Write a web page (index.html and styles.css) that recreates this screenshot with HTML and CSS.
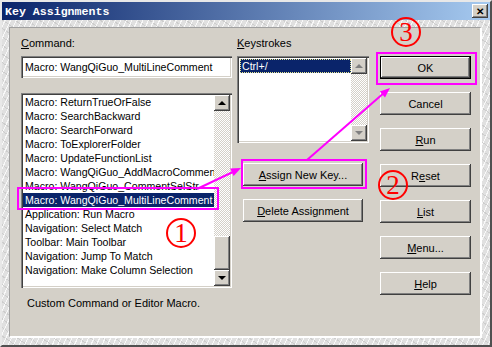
FILE: index.html
```html
<!DOCTYPE html>
<html lang="en">
<head>
    <meta charset="UTF-8">
    <title>Key Assignments</title>
    <link rel="stylesheet" href="styles.css">
</head>
<body>
    <div class="window">
        <div class="titlebar">
            <span class="title">Key Assignments</span>
            <span class="close">&#x2715;</span>
        </div>
        <div class="frame">
            <div class="panel">
                <div class="col col-command">
                    <div class="label"><u>C</u>ommand:</div>
                    <div class="field">Macro: WangQiGuo_MultiLineComment</div>
                    <div class="listbox commands">
                        <ul class="items">
                            <li>Macro: ReturnTrueOrFalse</li>
                            <li>Macro: SearchBackward</li>
                            <li>Macro: SearchForward</li>
                            <li>Macro: ToExplorerFolder</li>
                            <li>Macro: UpdateFunctionList</li>
                            <li>Macro: WangQiGuo_AddMacroComment</li>
                            <li>Macro: WangQiGuo_CommentSelStr</li>
                            <li class="selected">Macro: WangQiGuo_MultiLineComment</li>
                            <li>Application: Run Macro</li>
                            <li>Navigation: Select Match</li>
                            <li>Toolbar: Main Toolbar</li>
                            <li>Navigation: Jump To Match</li>
                            <li>Navigation: Make Column Selection</li>
                        </ul>
                        <div class="scrollbar">
                            <span class="sb-btn"><i class="arrow up"></i></span>
                            <span class="sb-track"><span class="sb-thumb"></span></span>
                            <span class="sb-btn"><i class="arrow down"></i></span>
                        </div>
                    </div>
                    <p class="hint">Custom Command or Editor Macro.</p>
                </div>

                <div class="col col-keys">
                    <div class="label"><u>K</u>eystrokes</div>
                    <div class="listbox keys">
                        <ul class="items">
                            <li class="selected focus">Ctrl+/</li>
                        </ul>
                        <div class="scrollbar">
                            <span class="sb-btn"><i class="arrow up off"></i></span>
                            <span class="sb-track"></span>
                            <span class="sb-btn"><i class="arrow down off"></i></span>
                        </div>
                    </div>
                    <button class="btn wide assign"><u>A</u>ssign New Key...</button>
                    <button class="btn wide"><u>D</u>elete Assignment</button>
                </div>

                <div class="col col-buttons">
                    <button class="btn default">OK</button>
                    <button class="btn">Cancel</button>
                    <button class="btn"><u>R</u>un</button>
                    <button class="btn">R<u>e</u>set</button>
                    <button class="btn"><u>L</u>ist</button>
                    <button class="btn"><u>M</u>enu...</button>
                    <button class="btn"><u>H</u>elp</button>
                </div>
            </div>
        </div>

        <!-- annotations drawn over the dialog -->
        <svg class="marks" width="492" height="347" viewBox="0 0 492 347">
            <rect x="18" y="188" width="200" height="21" />
            <rect x="242" y="160" width="124" height="28" />
            <rect x="377" y="53" width="99" height="31" />
            <line x1="197" y1="189" x2="235" y2="171" />
            <polygon points="241,168 233.6,175.9 230.2,168.6" />
            <line x1="307" y1="160" x2="385" y2="92" />
            <polygon points="390,88 385,97.5 379.8,91.5" />
        </svg>
        <span class="num n1">1</span>
        <span class="num n2">2</span>
        <span class="num n3">3</span>
    </div>
</body>
</html>
```

FILE: styles.css
```css
* {
    box-sizing: border-box;
}

body {
    margin: 0;
    background: #d4d0c8;
    font-family: "Liberation Sans", Arial, sans-serif;
    font-size: 11px;
}

:root {
    --face: #d4d0c8;
    --shadow: #808080;
    --dark: #404040;
    --navy: #0a246a;
    --mark: #ff00ff;
}

.window {
    position: relative;
    width: 492px;
    height: 347px;
    display: flex;
    flex-direction: column;
    border-top: 2px solid #e8e8e8;
    border-left: 2px solid #e8e8e8;
    border-right: 2px solid #505050;
    border-bottom: 2px solid #505050;
    background-color: #e0e0e0;
    background-image:
        repeating-linear-gradient(115deg, rgba(255,255,255,0.8) 0 1px, transparent 1px 5px),
        repeating-linear-gradient(35deg, rgba(160,160,160,0.3) 0 1px, transparent 1px 7px);
}

.titlebar {
    height: 18px;
    display: flex;
    align-items: center;
    justify-content: space-between;
    padding: 0 2px 0 3px;
    background: linear-gradient(to right, #0a246a, #a6caf0);
}

.title {
    color: white;
    font-family: "Liberation Mono", monospace;
    font-weight: bold;
    font-size: 11.6px;
}

.close {
    width: 16px;
    height: 14px;
    display: flex;
    align-items: center;
    justify-content: center;
    background: var(--face);
    font-size: 10px;
    font-weight: bold;
    color: black;
    box-shadow: inset -1px -1px var(--dark), inset 1px 1px #fff, inset -2px -2px var(--shadow);
}

.frame {
    flex: 1;
    padding: 7px 8px 7px 7px;
    display: flex;
}

.panel {
    flex: 1;
    display: flex;
    align-items: flex-start;
    padding: 9px 0 0 11px;
    background: var(--face);
    border-top: 1px solid #a0a0a0;
    border-left: 1px solid #a0a0a0;
    border-right: 2px solid #fff;
    border-bottom: 2px solid #fff;
}

.col {
    display: flex;
    flex-direction: column;
}

.col-command {
    width: 211px;
}

.col-keys {
    width: 132px;
    margin-left: 5px;
}

.col-buttons {
    width: 91px;
    margin-left: 11px;
    padding-top: 19px;
    gap: 13px;
}

.label {
    height: 13px;
    line-height: 13px;
    margin-bottom: 6px;
    color: black;
}

.field,
.listbox {
    background: white;
    box-shadow: inset 1px 1px var(--shadow), inset 2px 2px var(--dark), inset -1px -1px #fff, inset -2px -2px var(--face);
}

.field {
    height: 22px;
    line-height: 22px;
    padding-left: 4px;
    font-size: 10.6px;
    white-space: nowrap;
}

.listbox {
    display: flex;
    padding: 2px;
}

.listbox.commands {
    height: 195px;
    margin-top: 15px;
}

.listbox.keys {
    height: 87px;
}

.items {
    flex: 1;
    min-width: 0;
    margin: 0;
    padding: 0;
    list-style: none;
    overflow: hidden;
    font-size: 10.6px;
}

.items li {
    height: 14px;
    line-height: 14px;
    padding-left: 2px;
    white-space: nowrap;
    overflow: hidden;
}

.items li.selected {
    background: var(--navy);
    color: white;
}

.items li.focus {
    outline: 1px dotted #e8e890;
    outline-offset: -1px;
}

.keys .items {
    padding: 1px 0 0 1px;
}

.scrollbar {
    width: 16px;
    display: flex;
    flex-direction: column;
}

.sb-btn {
    height: 16px;
    display: flex;
    align-items: center;
    justify-content: center;
    background: var(--face);
    box-shadow: inset -1px -1px var(--dark), inset 1px 1px #fff, inset -2px -2px var(--shadow);
}

.sb-track {
    flex: 1;
    display: flex;
    flex-direction: column;
    justify-content: flex-end;
    background: repeating-conic-gradient(#ffffff 0 25%, #d4d0c8 0 50%) 0 0/2px 2px;
}

.sb-thumb {
    height: 34px;
    background: var(--face);
    box-shadow: inset -1px -1px var(--dark), inset 1px 1px #fff, inset -2px -2px var(--shadow);
}

.arrow {
    width: 0;
    height: 0;
    border-left: 4px solid transparent;
    border-right: 4px solid transparent;
}

.arrow.up {
    border-bottom: 4px solid black;
}

.arrow.down {
    border-top: 4px solid black;
}

.arrow.up.off {
    border-bottom-color: var(--shadow);
}

.arrow.down.off {
    border-top-color: var(--shadow);
}

.hint {
    margin: 9px 0 0 6px;
    line-height: 13px;
}

.btn {
    height: 23px;
    padding: 0;
    border: none;
    background: var(--face);
    font-family: inherit;
    font-size: 11px;
    font-weight: normal;
    color: black;
    box-shadow: inset -1px -1px var(--dark), inset 1px 1px #fff, inset -2px -2px var(--shadow);
}

.btn.default {
    border: 1px solid black;
}

.btn.wide {
    width: 120px;
    margin: 0 6px;
}

.btn.assign {
    margin-top: 20px;
    margin-bottom: 13px;
}

.marks {
    position: absolute;
    left: -2px;
    top: -2px;
    pointer-events: none;
}

.marks rect,
.marks line {
    fill: none;
    stroke: var(--mark);
    stroke-width: 2;
}

.marks polygon {
    fill: var(--mark);
}

.num {
    position: absolute;
    width: 30px;
    height: 30px;
    border: 2px solid #ff0000;
    border-radius: 50%;
    color: #ff0000;
    font-family: "Liberation Serif", serif;
    font-size: 27px;
    line-height: 27px;
    text-align: center;
}

.n1 { left: 164px; top: 216px; }
.n2 { left: 376px; top: 168px; }
.n3 { left: 389px; top: 15px; }
```
